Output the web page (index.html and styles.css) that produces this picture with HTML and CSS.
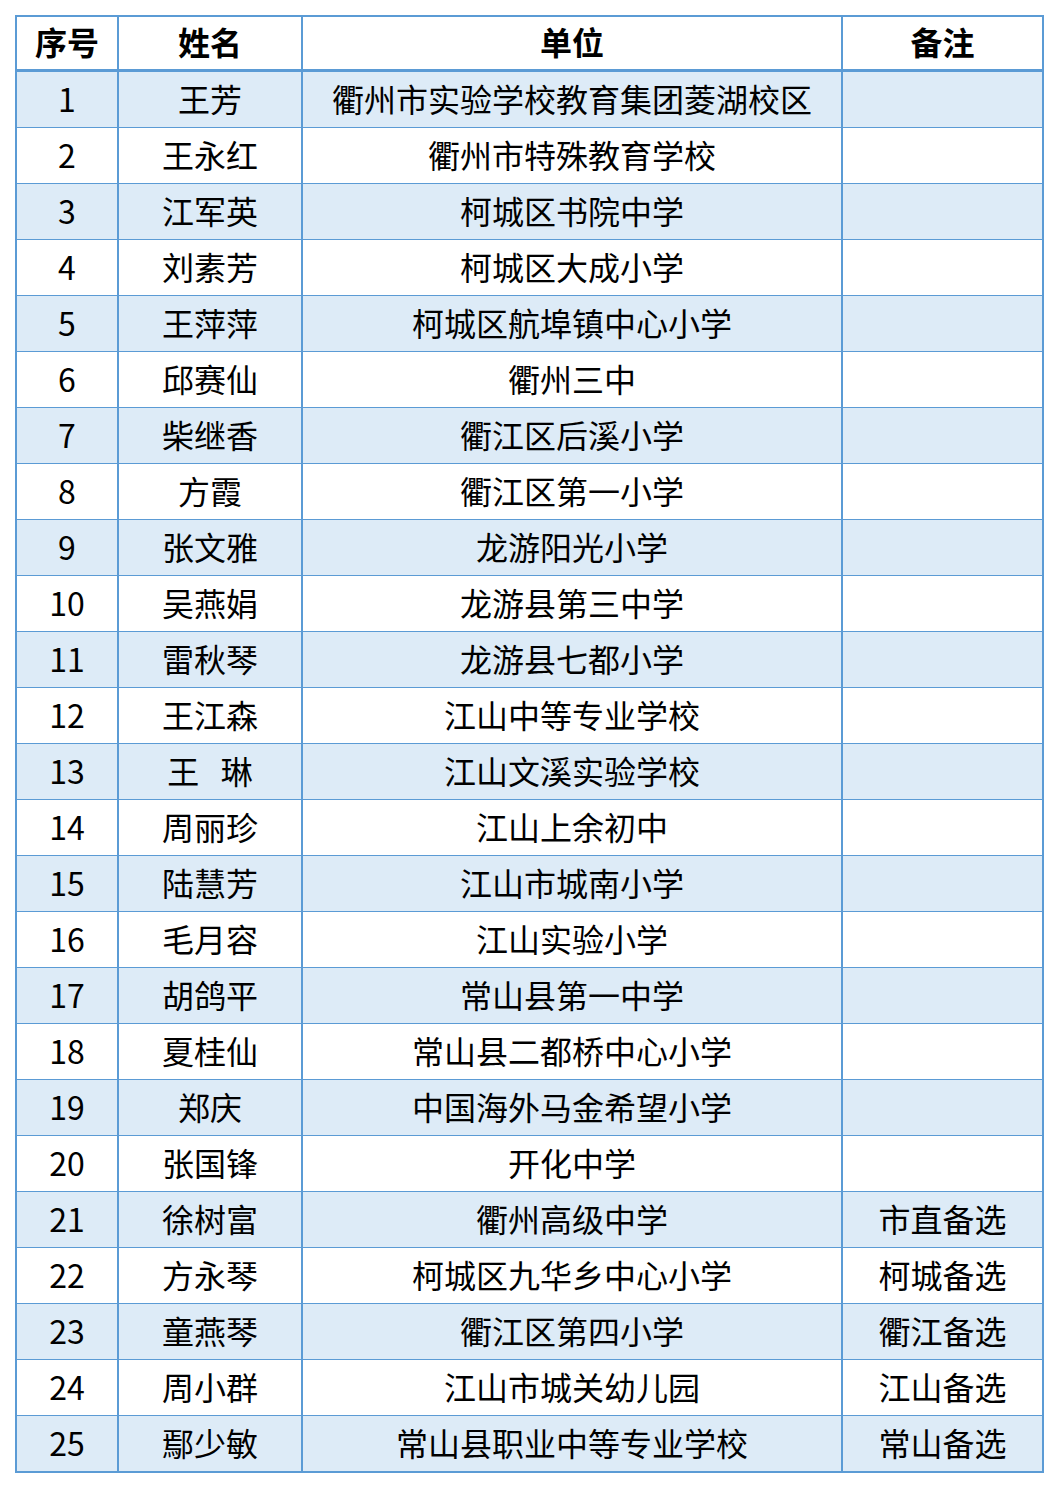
FILE: index.html
```html
<!DOCTYPE html>
<html lang="zh-CN">
<head>
<meta charset="utf-8">
<title>名单</title>
<link rel="stylesheet" href="styles.css">
</head>
<body>
<table class="roster">
  <colgroup>
    <col class="c-no">
    <col class="c-name">
    <col class="c-unit">
    <col class="c-note">
  </colgroup>
  <thead>
    <tr><th>序号</th><th>姓名</th><th>单位</th><th>备注</th></tr>
  </thead>
  <tbody>
    <tr><td>1</td><td>王芳</td><td>衢州市实验学校教育集团菱湖校区</td><td></td></tr>
    <tr><td>2</td><td>王永红</td><td>衢州市特殊教育学校</td><td></td></tr>
    <tr><td>3</td><td>江军英</td><td>柯城区书院中学</td><td></td></tr>
    <tr><td>4</td><td>刘素芳</td><td>柯城区大成小学</td><td></td></tr>
    <tr><td>5</td><td>王萍萍</td><td>柯城区航埠镇中心小学</td><td></td></tr>
    <tr><td>6</td><td>邱赛仙</td><td>衢州三中</td><td></td></tr>
    <tr><td>7</td><td>柴继香</td><td>衢江区后溪小学</td><td></td></tr>
    <tr><td>8</td><td>方霞</td><td>衢江区第一小学</td><td></td></tr>
    <tr><td>9</td><td>张文雅</td><td>龙游阳光小学</td><td></td></tr>
    <tr><td>10</td><td>吴燕娟</td><td>龙游县第三中学</td><td></td></tr>
    <tr><td>11</td><td>雷秋琴</td><td>龙游县七都小学</td><td></td></tr>
    <tr><td>12</td><td>王江森</td><td>江山中等专业学校</td><td></td></tr>
    <tr><td>13</td><td>王&nbsp;&nbsp;&nbsp;琳</td><td>江山文溪实验学校</td><td></td></tr>
    <tr><td>14</td><td>周丽珍</td><td>江山上余初中</td><td></td></tr>
    <tr><td>15</td><td>陆慧芳</td><td>江山市城南小学</td><td></td></tr>
    <tr><td>16</td><td>毛月容</td><td>江山实验小学</td><td></td></tr>
    <tr><td>17</td><td>胡鸽平</td><td>常山县第一中学</td><td></td></tr>
    <tr><td>18</td><td>夏桂仙</td><td>常山县二都桥中心小学</td><td></td></tr>
    <tr><td>19</td><td>郑庆</td><td>中国海外马金希望小学</td><td></td></tr>
    <tr><td>20</td><td>张国锋</td><td>开化中学</td><td></td></tr>
    <tr><td>21</td><td>徐树富</td><td>衢州高级中学</td><td>市直备选</td></tr>
    <tr><td>22</td><td>方永琴</td><td>柯城区九华乡中心小学</td><td>柯城备选</td></tr>
    <tr><td>23</td><td>童燕琴</td><td>衢江区第四小学</td><td>衢江备选</td></tr>
    <tr><td>24</td><td>周小群</td><td>江山市城关幼儿园</td><td>江山备选</td></tr>
    <tr><td>25</td><td>鄢少敏</td><td>常山县职业中等专业学校</td><td>常山备选</td></tr>
  </tbody>
</table>
</body>
</html>
```
FILE: styles.css
```css
html, body {
  margin: 0;
  padding: 0;
  background: #ffffff;
}

body {
  font-family: "Noto Sans CJK SC", "Noto Sans", sans-serif;
  color: #000000;
}

.roster {
  margin: 15px 0 0 15px;
  width: 1027px;
  border-collapse: collapse;
  table-layout: fixed;
  border: 2px solid #5b9bd5;
}

.c-no { width: 102px; }
.c-name { width: 184px; }
.c-unit { width: 540px; }
.c-note { width: 201px; }

.roster th,
.roster td {
  padding: 0 0 4px 0;
  text-align: center;
  vertical-align: middle;
  font-size: 32px;
  line-height: 40px;
  white-space: nowrap;
  border-left: 2px solid #5b9bd5;
  border-right: 2px solid #5b9bd5;
  border-top: 1px solid #5b9bd5;
  border-bottom: 1px solid #5b9bd5;
}

.roster th {
  font-weight: 700;
  height: 48px;
  border-bottom: 3px solid #5b9bd5;
  border-top: 2px solid #5b9bd5;
}

.roster td {
  font-weight: 400;
  height: 51px;
}

.roster tbody tr:nth-child(odd) td {
  background: #ddebf7;
}

.roster tbody tr:last-child td {
  border-bottom: 2px solid #5b9bd5;
}
```
